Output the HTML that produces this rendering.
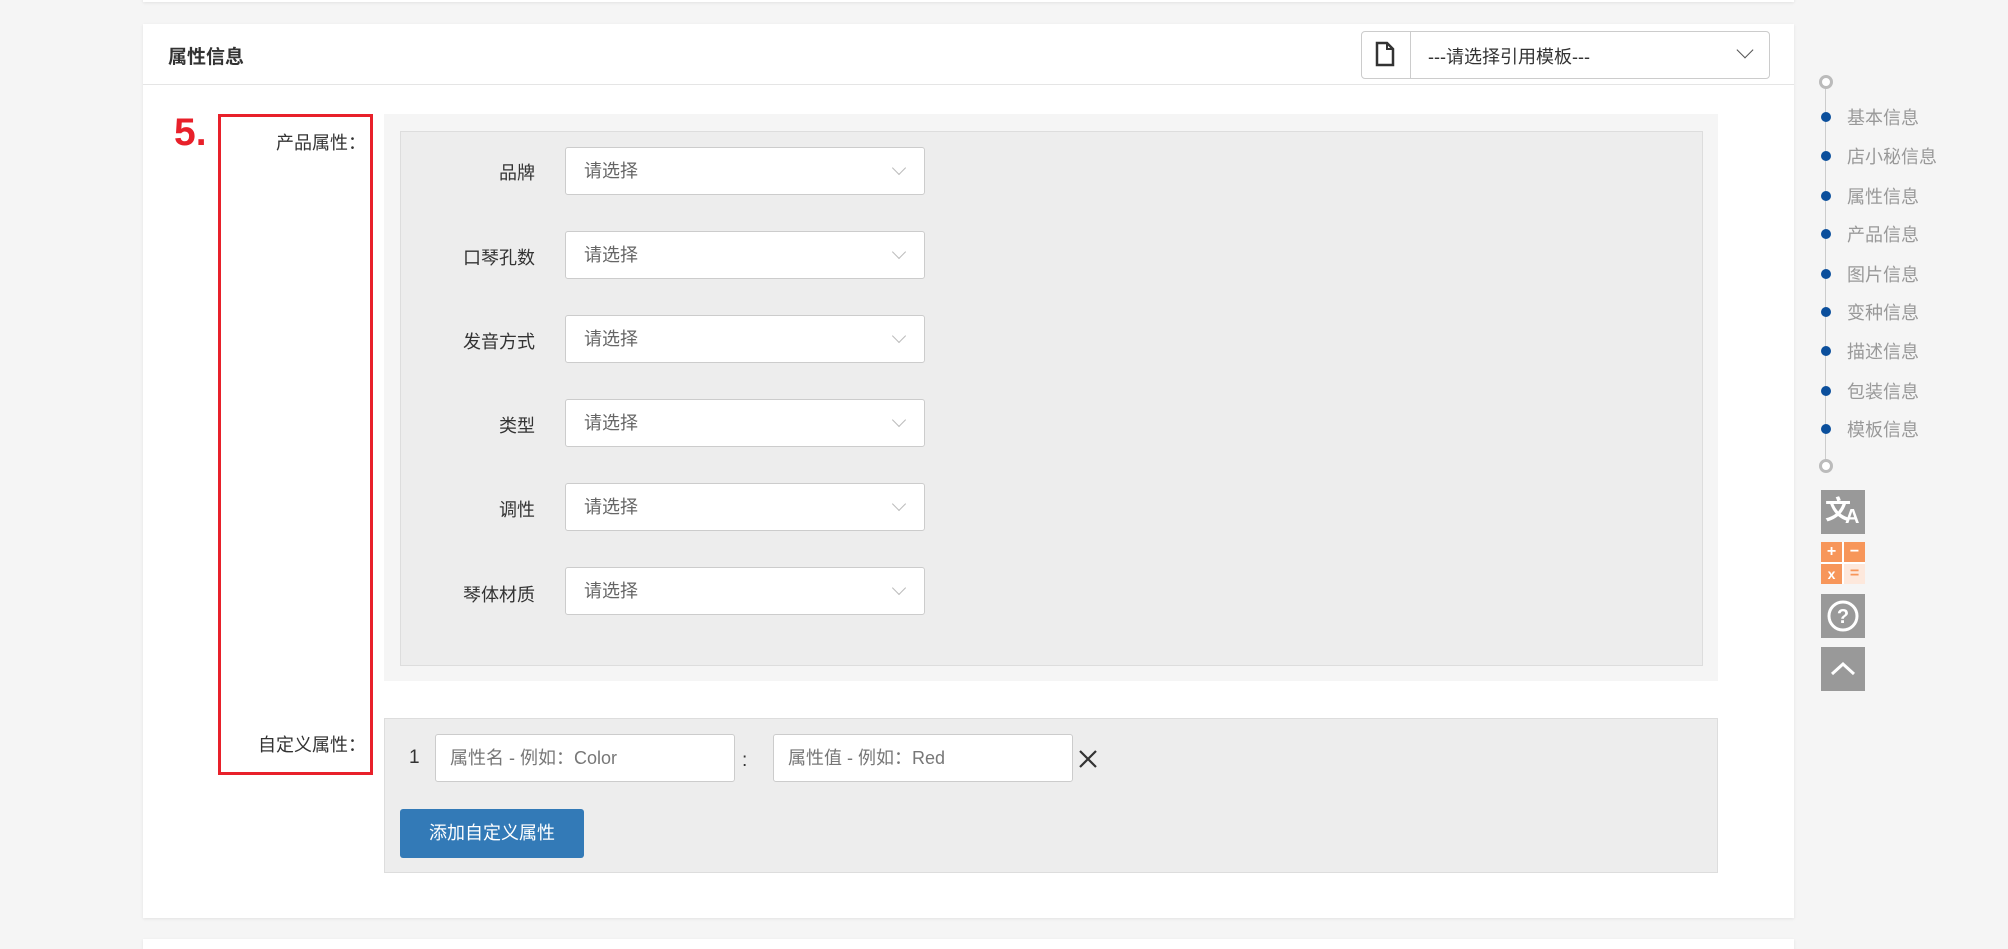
<!DOCTYPE html>
<html><head><meta charset="utf-8"><style>
*{box-sizing:border-box;margin:0;padding:0}
body{width:2008px;height:942px;background:#f5f5f5;font-family:"Liberation Sans","Noto Sans CJK SC",sans-serif;position:relative;overflow:hidden;color:#333}
.abs{position:absolute}
.card{background:#fff;box-shadow:0 1px 3px rgba(0,0,0,.08)}
.sel{position:absolute;left:565px;width:360px;height:48px;background:#fff;border:1px solid #ccc;border-radius:3px;font-size:18px;color:#666;padding:0 0 0 18px;line-height:46px}
.sel:after{content:"";position:absolute;right:20px;top:15px;width:9px;height:9px;border-right:1px solid #bbb;border-bottom:1px solid #bbb;transform:rotate(45deg)}
.lab{position:absolute;right:1473px;font-size:18px;color:#333;text-align:right;white-space:nowrap}
.nav{position:absolute;left:1847px;font-size:18px;color:#999}
.dot{position:absolute;left:1821px;width:10px;height:10px;border-radius:50%;background:#0b4f9c}
.ib{position:absolute;left:1821px;width:44px;height:44px;background:#999}
</style></head><body>
<div class="abs card" style="left:143px;top:-10px;width:1651px;height:12px"></div>
<div class="abs card" style="left:143px;top:24px;width:1651px;height:894px"></div>
<div class="abs card" style="left:143px;top:939px;width:1651px;height:10px"></div>
<div class="abs" style="left:143px;top:84px;width:1651px;height:1px;background:#e5e5e5"></div>
<div class="abs" style="left:168px;top:42px;font-size:19px;font-weight:bold;color:#333">属性信息</div>
<div class="abs" style="left:1361px;top:31px;width:409px;height:48px;border:1px solid #ccc;border-radius:4px;background:#fff"></div>
<div class="abs" style="left:1410px;top:31px;width:1px;height:48px;background:#ccc"></div>
<svg class="abs" style="left:1374px;top:41px" width="22" height="26" viewBox="0 0 22 26"><path d="M3 2h10l6 6v16H3z" fill="none" stroke="#333" stroke-width="2.5"/><path d="M13 2v6h6" fill="none" stroke="#333" stroke-width="2"/></svg>
<div class="abs" style="left:1428px;top:43px;font-size:18px;color:#333">---请选择引用模板---</div>
<div class="abs" style="left:1739px;top:44px;width:12px;height:12px;border-right:1.5px solid #555;border-bottom:1.5px solid #555;transform:rotate(45deg)"></div>

<div class="abs" style="left:174px;top:111px;font-size:39px;font-weight:bold;color:#e8202a">5.</div>
<div class="abs" style="left:218px;top:114px;width:155px;height:661px;border:3px solid #e8202a"></div>
<div class="lab" style="right:1642px;top:129px">产品属性：</div>
<div class="lab" style="right:1642px;top:731px">自定义属性：</div>

<div class="abs" style="left:384px;top:114px;width:1334px;height:567px;background:#f5f5f5"></div>
<div class="abs" style="left:400px;top:131px;width:1303px;height:535px;background:#ededed;border:1px solid #ddd"></div>
<div class="lab" style="top:159px">品牌</div><div class="sel" style="top:147px">请选择</div>
<div class="lab" style="top:244px">口琴孔数</div><div class="sel" style="top:231px">请选择</div>
<div class="lab" style="top:328px">发音方式</div><div class="sel" style="top:315px">请选择</div>
<div class="lab" style="top:412px">类型</div><div class="sel" style="top:399px">请选择</div>
<div class="lab" style="top:496px">调性</div><div class="sel" style="top:483px">请选择</div>
<div class="lab" style="top:581px">琴体材质</div><div class="sel" style="top:567px">请选择</div>

<div class="abs" style="left:384px;top:718px;width:1334px;height:155px;background:#ededed;border:1px solid #ddd"></div>
<div class="abs" style="left:409px;top:747px;font-size:19px">1</div>
<div class="abs" style="left:435px;top:734px;width:300px;height:48px;background:#fff;border:1px solid #ccc;border-radius:3px;font-size:18px;color:#777;padding-left:14px;line-height:46px">属性名 - 例如：Color</div>
<div class="abs" style="left:742px;top:750px;font-size:19px">:</div>
<div class="abs" style="left:773px;top:734px;width:300px;height:48px;background:#fff;border:1px solid #ccc;border-radius:3px;font-size:18px;color:#777;padding-left:14px;line-height:46px">属性值 - 例如：Red</div>
<svg class="abs" style="left:1078px;top:749px" width="20" height="20"><path d="M2 2L18 18M18 2L2 18" stroke="#333" stroke-width="2.2"/></svg>
<div class="abs" style="left:400px;top:809px;width:184px;height:49px;background:#337ab7;border-radius:3px;color:#fff;font-size:18px;text-align:center;line-height:49px">添加自定义属性</div>

<div class="abs" style="left:1825px;top:82px;width:1px;height:384px;background:#ccc"></div>
<div class="abs" style="left:1819px;top:75px;width:14px;height:14px;border-radius:50%;border:3px solid #bbb;background:#fff"></div>
<div class="abs" style="left:1819px;top:459px;width:14px;height:14px;border-radius:50%;border:3px solid #bbb;background:#fff"></div>
<div class="dot" style="top:112px"></div><div class="nav" style="top:104px">基本信息</div>
<div class="dot" style="top:151px"></div><div class="nav" style="top:143px">店小秘信息</div>
<div class="dot" style="top:191px"></div><div class="nav" style="top:183px">属性信息</div>
<div class="dot" style="top:229px"></div><div class="nav" style="top:221px">产品信息</div>
<div class="dot" style="top:269px"></div><div class="nav" style="top:261px">图片信息</div>
<div class="dot" style="top:307px"></div><div class="nav" style="top:299px">变种信息</div>
<div class="dot" style="top:346px"></div><div class="nav" style="top:338px">描述信息</div>
<div class="dot" style="top:386px"></div><div class="nav" style="top:378px">包装信息</div>
<div class="dot" style="top:424px"></div><div class="nav" style="top:416px">模板信息</div>

<div class="ib" style="top:490px"><div class="abs" style="left:4px;top:0px;color:#fff;font-size:26px;font-weight:bold">文</div><div class="abs" style="left:24px;top:16px;color:#fff;font-size:20px;font-weight:bold">A</div></div>
<div class="abs" style="left:1821px;top:542px;width:44px;height:42px;background:#fff">
<div class="abs" style="left:0;top:0;width:21px;height:20px;background:#f7965a;color:#fff;font-size:16px;font-weight:bold;text-align:center;line-height:20px">+</div>
<div class="abs" style="left:23px;top:0;width:21px;height:20px;background:#f7965a;color:#fff;font-size:16px;font-weight:bold;text-align:center;line-height:20px">−</div>
<div class="abs" style="left:0;top:22px;width:21px;height:20px;background:#f7965a;color:#fff;font-size:14px;font-weight:bold;text-align:center;line-height:20px">x</div>
<div class="abs" style="left:23px;top:22px;width:21px;height:20px;background:#fde8dc;color:#f7965a;font-size:16px;font-weight:bold;text-align:center;line-height:20px">=</div></div>
<div class="ib" style="top:594px"><svg width="44" height="44"><circle cx="22" cy="22" r="14" fill="none" stroke="#fff" stroke-width="3"/><text x="22" y="29" fill="#fff" font-size="20" font-weight="bold" text-anchor="middle" font-family="Liberation Sans">?</text></svg></div>
<div class="ib" style="top:647px"><svg width="44" height="44"><path d="M11 27L22 17L33 27" fill="none" stroke="#fff" stroke-width="3"/></svg></div>
</body></html>
